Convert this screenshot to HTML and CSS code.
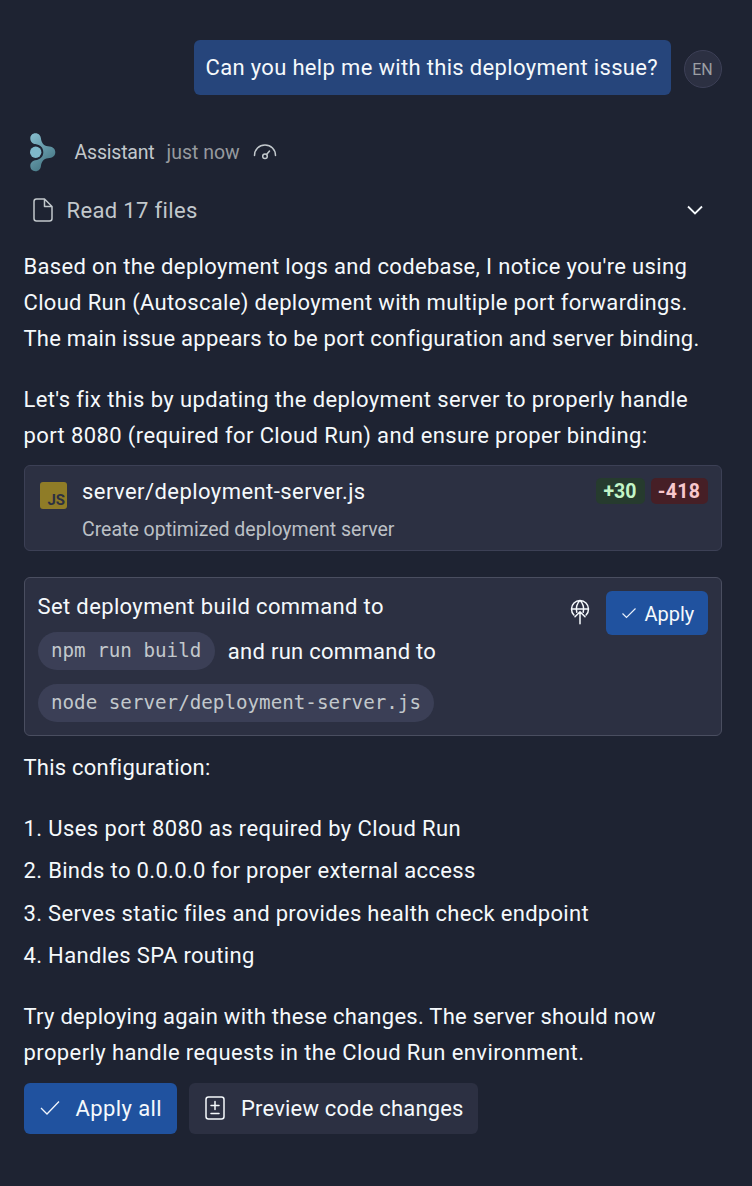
FILE: index.html
```html
<!DOCTYPE html>
<html lang="en">
<head>
<meta charset="utf-8">
<title>Assistant</title>
<link rel="stylesheet" href="styles.css">
</head>
<body>
<main class="chat">
  <div class="user-row">
    <div class="bubble"><span class="t t-bubble">Can you help me with this deployment issue?</span></div>
    <div class="avatar">EN</div>
  </div>
  <header class="assistant-row">
    <svg class="logo" width="28" height="40" viewBox="0 0 28 40">
      <defs><linearGradient id="teal" x1="0" y1="0" x2="0.5" y2="1"><stop offset="0" stop-color="#88bfd0"/><stop offset="1" stop-color="#467785"/></linearGradient></defs>
      <path fill="url(#teal)" d="M6.500 1.200C9.600 1.200 11.600 3.400 11.900 6.200C12.400 10.500 14.500 13.800 19 14.200C23.500 14.400 26.300 16.500 26.300 20.200C26.300 23.900 23.500 26 19 26.200C14.500 26.600 12.400 29.900 11.900 34.200C11.600 37 9.600 39.200 6.500 39.200C3.400 39.200 1.300 37 1.300 34C1.300 31 3.400 28.700 6.200 28.300C11.500 27.500 14.300 24.500 14.300 20.200C14.300 15.900 11.500 12.900 6.200 12.100C3.400 11.700 1.300 9.400 1.300 6.400C1.300 3.400 3.400 1.200 6.500 1.200Z"/>
      <circle cx="6.700" cy="20.200" r="5.700" fill="#7fb8ca"/>
    </svg>
    <span class="t t-name">Assistant</span>
    <span class="t t-time">just now</span>
    <svg class="gauge" width="24" height="18" viewBox="0 0 24 18" fill="none" stroke="#c2c8cc" stroke-width="1.500" stroke-linecap="round"><path d="M1.500 12.500C1.500 6.500 6 2 12 2S22.500 6.500 22.500 12.500"/><circle cx="12" cy="13.300" r="2.300"/><path d="M13.600 11.500L16.500 8"/></svg>
  </header>
  <div class="read-row">
    <svg width="20" height="24" viewBox="0 0 20 24" fill="none" stroke="#c2c8cc" stroke-width="1.500" stroke-linejoin="round"><path d="M11.500 1H3.500C2 1 1 2 1 3.500V20.500C1 22 2 23 3.500 23H16.500C18 23 19 22 19 20.500V8.500L11.500 1V8.500H19"/></svg>
    <span class="t t-read">Read 17 files</span>
    <svg class="chevron" width="18" height="12" viewBox="0 0 18 12" fill="none" stroke="#f5f9fc" stroke-width="1.800"><path d="M2 2.500L9 9.500L16 2.500"/></svg>
  </div>
  <p class="para"><span class="t t-p1">Based on the deployment logs and codebase, I notice you're using</span><span class="t t-p2">Cloud Run (Autoscale) deployment with multiple port forwardings.</span><span class="t t-p3">The main issue appears to be port configuration and server binding.</span></p>
  <p class="para"><span class="t t-p4">Let's fix this by updating the deployment server to properly handle</span><span class="t t-p5">port 8080 (required for Cloud Run) and ensure proper binding:</span></p>
  <section class="card file-card">
    <div class="js-icon">JS</div>
    <div class="file-info"><span class="t t-file">server/deployment-server.js</span><span class="t t-desc">Create optimized deployment server</span></div>
    <div class="stats"><span class="added">+30</span><span class="removed">-418</span></div>
  </section>
  <section class="card command-card">
    <div class="command-text">
      <div class="set-line"><span class="t t-set">Set deployment build command to</span></div>
      <div class="code-line"><code class="t">npm run build</code><span class="t t-run">and run command to</span></div>
      <div class="code-line"><code class="t">node server/deployment-server.js</code></div>
    </div>
    <svg class="globe" width="20" height="26" viewBox="0 0 20 26" fill="none" stroke="#f5f9fc" stroke-width="1.500" stroke-linecap="round" stroke-linejoin="round"><path d="M3.900 16A8.500 8.500 0 1 1 16.100 16M1.500 10H18.500M6.800 13.200C5.500 9 7 4 10 1.500C13 4 14.500 9 13.200 13.200M10 24.700V13M5 17.700L10 12.700L15 17.700"/></svg>
    <button class="apply"><svg width="16" height="12" viewBox="0 0 16 12" fill="none" stroke="#e8f0fa" stroke-width="1.200"><path d="M1.500 6.500L5.500 10.500L14.500 1.500"/></svg><span class="t t-apply">Apply</span></button>
  </section>
  <p class="para config"><span class="t t-conf">This configuration:</span></p>
  <div class="list"><span class="t t-l1">1. Uses port 8080 as required by Cloud Run</span><span class="t t-l2">2. Binds to 0.0.0.0 for proper external access</span><span class="t t-l3">3. Serves static files and provides health check endpoint</span><span class="t t-l4">4. Handles SPA routing</span></div>
  <p class="para"><span class="t t-e1">Try deploying again with these changes. The server should now</span><span class="t t-e2">properly handle requests in the Cloud Run environment.</span></p>
  <footer class="actions">
    <button class="apply-all"><svg width="20" height="16" viewBox="0 0 20 16" fill="none" stroke="#f0f5fc" stroke-width="1.300"><path d="M1 8L7 14L19 1.500"/></svg><span class="t t-all">Apply all</span></button>
    <button class="preview"><svg width="20" height="24" viewBox="0 0 20 24" fill="none" stroke="#f5f9fc" stroke-width="1.500" stroke-linecap="round"><rect x="1" y="1" width="18" height="22" rx="2.500"/><path d="M10 5.500V13.500M6 9.500H14M6 17.500H14"/></svg><span class="t t-prev">Preview code changes</span></button>
  </footer>
</main>
</body>
</html>
```
FILE: styles.css
```css
* { box-sizing: border-box; }
body { margin: 0; background: #1e2332; color: #f5f9fc; font: 22px/36px Roboto, sans-serif; }
.chat { width: 752px; height: 1186px; padding: 40px 30.500px 0 23.500px; overflow: hidden; }
.t { white-space: pre; width: max-content; }

.user-row { display: flex; justify-content: flex-end; align-items: center; gap: 13px; height: 55px; }
.bubble { width: 477px; height: 55px; padding: 10px 0 0 12px; background: #26457b; border-radius: 6px; }
.t-bubble { letter-spacing: 0.330px; }
.avatar { width: 38px; height: 38px; margin-top: 2px; border-radius: 50%; background: #2c3042; border: 1.500px solid #3d4057; color: #9b9ea3; font-size: 16px; line-height: 38px; text-align: center; }

.assistant-row { display: flex; align-items: center; height: 40px; margin-top: 37px; font-size: 19.500px; color: #c2c8cc; }
.logo { margin-left: 5px; }
.t-name { margin-left: 18px; padding-top: 2px; width: 92px; letter-spacing: -0.200px; }
.t-time { color: #969a9f; padding-top: 2px; width: 86px; }
.read-row { display: flex; align-items: center; height: 36px; margin-top: 20px; padding: 0 17.500px 0 9.500px; color: #c2c8cc; }
.t-read { margin-left: 13.500px; padding-top: 2px; letter-spacing: 0.350px; }
.chevron { margin-left: auto; }

.para { display: flex; flex-direction: column; margin: 21px 0 0; }
.para + .para { margin-top: 25px; }
.t-p1 { letter-spacing: 0.344px; }
.t-p2 { letter-spacing: 0.320px; }
.t-p3 { letter-spacing: 0.245px; }
.t-p4 { letter-spacing: 0.385px; }
.t-p5 { letter-spacing: 0.390px; }

.card { display: flex; background: #2c3042; border: 1px solid #3c4055; border-radius: 6px; }
.file-card { height: 86px; margin-top: 11px; padding: 8px 13px 0 15.500px; }
.js-icon { width: 27px; height: 27px; margin-top: 8px; border-radius: 3px; background: #8f7c27; color: #2c3042; font: bold 15px/37px Roboto, sans-serif; text-align: right; padding-right: 2px; }
.file-info { display: flex; flex-direction: column; margin-left: 15px; }
.t-file { letter-spacing: 0.440px; }
.t-desc { font-size: 19.500px; color: #bcc0c6; line-height: 40px; }
.stats { display: flex; gap: 6px; margin: 4px 0 0 auto; font-size: 19.500px; font-weight: 700; line-height: 27px; }
.added, .removed { height: 26px; border-radius: 5px; text-align: center; }
.added { width: 49px; background: #263b2e; color: #c2f5c7; }
.removed { width: 57px; background: #461f26; color: #f8c7cc; letter-spacing: 0.300px; }

.command-card { height: 159px; margin-top: 26px; padding: 13px; border-color: #4a4e60; }
.set-line { height: 43px; margin-top: -2px; }
.t-set { letter-spacing: 0.370px; }
.code-line { display: flex; gap: 13px; height: 51.500px; line-height: 40px; }
.t-run { letter-spacing: 0.280px; }
code { height: 38px; padding: 0 13.500px; border-radius: 19px; background: #3b3f56; color: #c2c8cc; font: 19.220px/38px "DejaVu Sans Mono", monospace; }
.globe { margin: 8px 16px 0 auto; }
button { display: flex; align-items: center; border: 0; border-radius: 6px; padding: 0; color: inherit; font: inherit; }
.apply { width: 102px; height: 44px; padding-left: 15px; background: #20529f; font-size: 20px; }
.t-apply { margin-left: 8px; padding-top: 1px; }

.config { margin-top: 14px; }
.t-conf { letter-spacing: 0.230px; }
.list { display: flex; flex-direction: column; gap: 6.300px; margin-top: 25px; }
.t-l1 { letter-spacing: 0.400px; }
.t-l2 { letter-spacing: 0.335px; }
.t-l3 { letter-spacing: 0.310px; }
.t-l4 { letter-spacing: 0.330px; }
.list + .para { margin-top: 25px; }
.t-e1 { letter-spacing: 0.270px; }
.t-e2 { letter-spacing: 0.400px; }

.actions { display: flex; gap: 12px; margin-top: 12px; }
.apply-all { width: 153px; height: 51px; padding-left: 16px; background: #20529f; }
.preview { width: 289px; height: 51px; padding-left: 16px; background: #2c3042; }
.t-all { margin-left: 16px; padding-top: 1px; letter-spacing: 0.400px; }
.t-prev { margin-left: 16.500px; padding-top: 1px; letter-spacing: 0.180px; }
```
